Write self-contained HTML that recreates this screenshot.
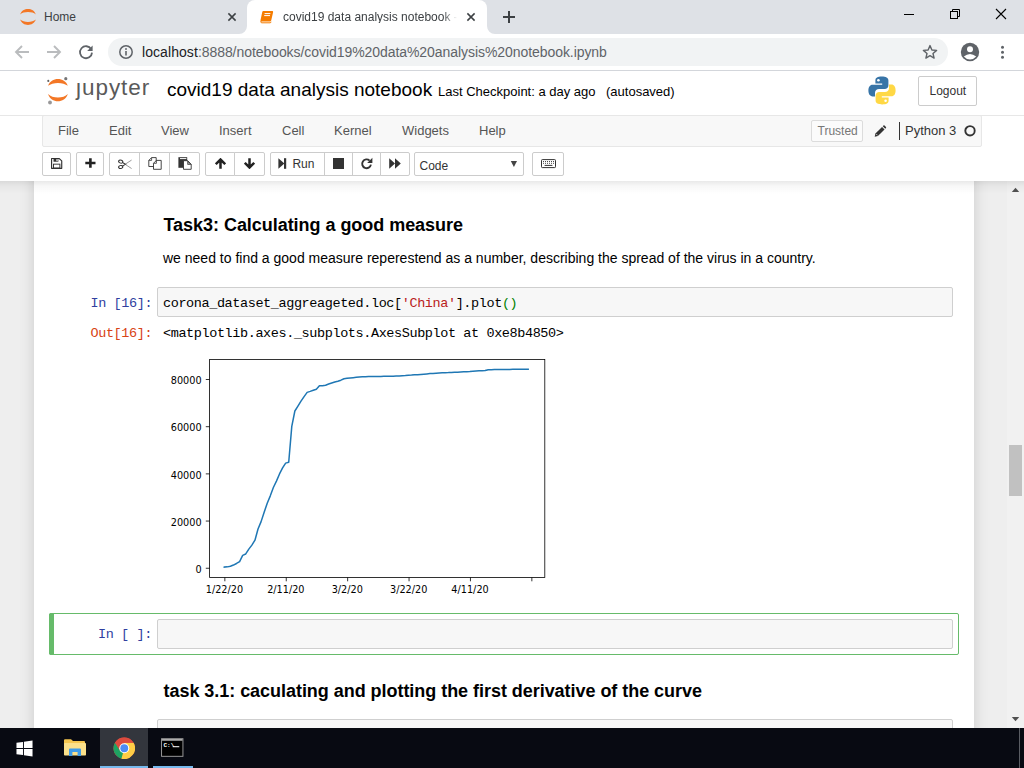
<!DOCTYPE html>
<html>
<head>
<meta charset="utf-8">
<title>covid19 data analysis notebook</title>
<style>
html,body{margin:0;padding:0;}
body{width:1024px;height:768px;overflow:hidden;position:relative;background:#fff;font-family:"Liberation Sans",Arial,sans-serif;color:#000;}
.abs{position:absolute;}
.t{position:absolute;white-space:nowrap;line-height:1;}
/* ---------- browser chrome ---------- */
#tabstrip{left:0;top:0;width:1024px;height:34px;background:#dee1e6;}
#tab-active{left:247px;top:0;width:240px;height:34px;background:#fff;border-radius:8px 8px 0 0;}
#navbar{left:0;top:34px;width:1024px;height:36px;background:#fff;}
#navline{left:0;top:70px;width:1024px;height:1px;background:#d3d6db;}
#omni{left:108px;top:38px;width:840px;height:28px;border-radius:14px;background:#f1f3f4;}
.chrometxt{font-size:12px;color:#3c4043;}
/* ---------- jupyter header ---------- */
#hdrline{left:0;top:115px;width:1024px;height:1px;background:#e7e7e7;}
#menubar{left:42px;top:115px;width:938px;height:30px;background:#f8f8f8;border:1px solid #e7e7e7;border-radius:2px;}
.menu{font-size:13px;color:#555;top:124px;}
.btn{position:absolute;top:152px;height:22px;border:1px solid #ccc;background:#fff;box-sizing:content-box;}
/* ---------- notebook ---------- */
#site{left:0;top:181px;width:1007px;height:547px;background:#eee;overflow:hidden;}
#nbc{left:34px;top:-20px;width:940px;height:600px;background:#fff;box-shadow:0 0 12px 1px rgba(87,87,87,0.2);}
.mono{font-family:"Liberation Mono","DejaVu Sans Mono",monospace;font-size:13.5px;letter-spacing:-0.4px;}
.inbox{position:absolute;border:1px solid #cfcfcf;border-radius:2px;background:#f7f7f7;box-sizing:border-box;}
/* ---------- taskbar ---------- */
#taskbar{left:0;top:728px;width:1024px;height:40px;background:#080a12;}
</style>
</head>
<body>

<!-- ================= TAB STRIP ================= -->
<div id="tabstrip" class="abs"></div>
<div id="tab-active" class="abs"></div>
<div id="navbar" class="abs"></div>
<div id="navline" class="abs"></div>
<div id="omni" class="abs"></div>

<!-- inactive-tab / active-tab "feet" -->
<svg class="abs" style="left:239px;top:26px" width="8" height="8"><path d="M0 8 H8 V0 A8 8 0 0 1 0 8 Z" fill="#fff"/></svg>
<svg class="abs" style="left:487px;top:26px" width="8" height="8"><path d="M8 8 H0 V0 A8 8 0 0 0 8 8 Z" fill="#fff"/></svg>

<!-- Home tab -->
<svg class="abs" style="left:20px;top:9px" width="16" height="16" viewBox="0 0 16 16">
  <path d="M0.2 5.4 C2.4 -1.8 13.6 -1.8 15.8 5.4 C12.4 2.33 3.6 2.33 0.2 5.4 Z" fill="#f37726"/>
  <path d="M0.2 10.6 C2.4 17.8 13.6 17.8 15.8 10.6 C12.4 13.67 3.6 13.67 0.2 10.6 Z" fill="#f37726"/>
</svg>
<div class="t chrometxt" style="left:44px;top:11px">Home</div>
<svg class="abs" style="left:226px;top:11px" width="12" height="12" viewBox="0 0 12 12"><path d="M2.4 2.4 L9.6 9.6 M9.6 2.4 L2.4 9.6" stroke="#3c4043" stroke-width="1.5" fill="none"/></svg>

<!-- Active tab -->
<svg class="abs" style="left:259px;top:10px" width="15" height="14" viewBox="0 0 15 14">
  <path d="M4.2 1 H13.2 Q14.4 1 14.1 2.2 L12.2 10.6 Q12 11.6 11 11.6 H2.6 Q1.2 11.6 1.5 10.3 L3.2 2.2 Q3.5 1 4.2 1 Z" fill="#f57c00"/>
  <path d="M2 11 Q1.4 12.8 2.8 12.8 H11 Q11.9 12.8 12.2 11.8" fill="none" stroke="#f57c00" stroke-width="1"/>
  <path d="M5.6 3.6 H11.4 M5.2 5.6 H11" stroke="#fff" stroke-width="1" fill="none"/>
</svg>
<div class="t chrometxt" style="left:283px;top:11px;width:174px;overflow:hidden;-webkit-mask-image:linear-gradient(90deg,#000 0,#000 160px,transparent 174px);">covid19 data analysis notebook - Jupyter Notebook</div>
<svg class="abs" style="left:465px;top:11px" width="12" height="12" viewBox="0 0 12 12"><path d="M2.4 2.4 L9.6 9.6 M9.6 2.4 L2.4 9.6" stroke="#3c4043" stroke-width="1.5" fill="none"/></svg>
<svg class="abs" style="left:502px;top:10px" width="14" height="14" viewBox="0 0 14 14"><path d="M7 1 V13 M1 7 H13" stroke="#3c4043" stroke-width="2" fill="none"/></svg>

<!-- window controls -->
<div class="abs" style="left:904px;top:14px;width:10px;height:1px;background:#000"></div>
<svg class="abs" style="left:949px;top:8px" width="13" height="13" viewBox="0 0 13 13">
  <rect x="1.5" y="3.5" width="7" height="7" fill="none" stroke="#000" stroke-width="1"/>
  <path d="M3.5 3.5 V1.5 H10.5 V8.5 H8.5" fill="none" stroke="#000" stroke-width="1"/>
</svg>
<svg class="abs" style="left:995px;top:8px" width="12" height="12" viewBox="0 0 12 12"><path d="M1 1 L11 11 M11 1 L1 11" stroke="#000" stroke-width="1.1" fill="none"/></svg>

<!-- nav buttons -->
<svg class="abs" style="left:14px;top:44px" width="16" height="16" viewBox="0 0 16 16"><path d="M15 8 H2.5 M8 2 L2 8 L8 14" stroke="#babcbe" stroke-width="1.9" fill="none"/></svg>
<svg class="abs" style="left:46px;top:44px" width="16" height="16" viewBox="0 0 16 16"><path d="M1 8 H13.5 M8 2 L14 8 L8 14" stroke="#babcbe" stroke-width="1.9" fill="none"/></svg>
<svg class="abs" style="left:78px;top:44px" width="16" height="16" viewBox="0 0 16 16">
  <path d="M13.2 5.2 A6 6 0 1 0 14 8.6" stroke="#5f6368" stroke-width="1.8" fill="none"/>
  <path d="M14.6 1.6 V7 H9.2 Z" fill="#5f6368"/>
</svg>

<!-- omnibox content -->
<svg class="abs" style="left:118px;top:44px" width="16" height="16" viewBox="0 0 16 16">
  <circle cx="8" cy="8" r="6.2" fill="none" stroke="#5f6368" stroke-width="1.5"/>
  <path d="M8 7 V11.4" stroke="#5f6368" stroke-width="1.6"/><circle cx="8" cy="5" r="0.95" fill="#5f6368"/>
</svg>
<div class="t" style="left:142px;top:45px;font-size:14px;color:#5f6368;letter-spacing:-0.062px"><span style="color:#202124;letter-spacing:0.07px">localhost</span>:8888/notebooks/covid19%20data%20analysis%20notebook.ipynb</div>
<svg class="abs" style="left:922px;top:44px" width="16" height="16" viewBox="0 0 16 16"><path d="M8 1.6 L9.9 6 L14.6 6.4 L11 9.5 L12.1 14.1 L8 11.7 L3.9 14.1 L5 9.5 L1.4 6.4 L6.1 6 Z" fill="none" stroke="#5f6368" stroke-width="1.4" stroke-linejoin="round"/></svg>
<svg class="abs" style="left:960px;top:42px" width="20" height="20" viewBox="0 0 20 20">
  <circle cx="10" cy="10" r="9.2" fill="#5f6368"/>
  <circle cx="10" cy="7.2" r="3" fill="#fff"/>
  <path d="M3.8 14.6 Q10 9.6 16.2 14.6 Q13.6 17.6 10 17.6 Q6.4 17.6 3.8 14.6 Z" fill="#fff"/>
</svg>
<svg class="abs" style="left:1000px;top:44px" width="5" height="16" viewBox="0 0 5 16"><circle cx="2.5" cy="3.3" r="1.5" fill="#5f6368"/><circle cx="2.5" cy="8.3" r="1.5" fill="#5f6368"/><circle cx="2.5" cy="13.3" r="1.5" fill="#5f6368"/></svg>

<!-- ================= JUPYTER HEADER ================= -->

<!-- jupyter logo -->
<svg class="abs" style="left:44px;top:74px" width="28" height="32" viewBox="0 0 28 32">
  <path d="M4.1 11.8 C7 2.7 20.8 2.7 23.8 11.8 C19.5 7.9 8.4 7.9 4.1 11.8 Z" fill="#f37726"/>
  <path d="M4.1 20 C7 29.7 20.8 29.7 23.8 20 C19.5 24.7 8.4 24.7 4.1 20 Z" fill="#f37726"/>
  <circle cx="21.8" cy="4.7" r="1.6" fill="#767677"/>
  <circle cx="4.3" cy="6.9" r="1.05" fill="#616262"/>
  <circle cx="6" cy="28.5" r="1.9" fill="#989798"/>
</svg>
<div class="t" id="jup" style="left:76px;top:77px;font-size:22.5px;color:#5a5a5a;letter-spacing:0.95px">&#567;upyter</div>
<div class="t" id="nbname" style="left:167px;top:80px;font-size:19px;color:#000">covid19 data analysis notebook</div>
<div class="t" id="ckpt" style="left:438px;top:85px;font-size:13px;color:#000">Last Checkpoint: a day ago</div>
<div class="t" id="autos" style="left:606px;top:85px;font-size:13px;color:#000">(autosaved)</div>

<!-- python logo -->
<svg class="abs" style="left:868px;top:76px" width="28" height="29" viewBox="0 0 28 29">
  <path d="M13.8 0.5 C9.6 0.5 7.4 1.6 7.4 4.4 V7.6 H14.2 V8.8 H4.6 C1.8 8.8 0.4 11.2 0.4 14.6 C0.4 18 1.8 20.4 4.6 20.4 H7 V16.8 C7 14.6 8.8 13 11 13 H16.8 C18.8 13 20.4 11.4 20.4 9.4 V4.4 C20.4 1.8 17.8 0.5 13.8 0.5 Z" fill="#3774a7"/>
  <circle cx="10.4" cy="4.2" r="1.3" fill="#fff"/>
  <path d="M14.2 28.5 C18.4 28.5 20.6 27.4 20.6 24.6 V21.4 H13.8 V20.2 H23.4 C26.2 20.2 27.6 17.8 27.6 14.4 C27.6 11 26.2 8.6 23.4 8.6 H21 V12.2 C21 14.4 19.2 16 17 16 H11.2 C9.2 16 7.6 17.6 7.6 19.6 V24.6 C7.6 27.2 10.2 28.5 14.2 28.5 Z" fill="#ffd845"/>
  <circle cx="17.6" cy="24.8" r="1.3" fill="#fff"/>
</svg>
<div class="abs" style="left:918px;top:76px;width:57px;height:28px;border:1px solid #ccc;border-radius:2px;background:#fff"></div>
<div class="t" id="logout" style="left:929.5px;top:85px;font-size:12px;color:#333">Logout</div>
<div id="hdrline" class="abs"></div>
<div id="menubar" class="abs"></div>

<!-- menus -->
<div class="t menu" id="m1" style="left:58px">File</div>
<div class="t menu" id="m2" style="left:109px">Edit</div>
<div class="t menu" id="m3" style="left:161px">View</div>
<div class="t menu" id="m4" style="left:219px">Insert</div>
<div class="t menu" id="m5" style="left:282px">Cell</div>
<div class="t menu" id="m6" style="left:334px">Kernel</div>
<div class="t menu" id="m7" style="left:402px">Widgets</div>
<div class="t menu" id="m8" style="left:479px">Help</div>
<div class="abs" style="left:811px;top:120px;width:50px;height:20px;border:1px solid #dcdcdc;border-radius:2px;background:#fbfbfb"></div>
<div class="t" id="trusted" style="left:817.5px;top:125px;font-size:12px;color:#777">Trusted</div>
<svg class="abs" style="left:874px;top:124.5px" width="12.5" height="12.5" viewBox="0 0 14 14">
  <path d="M0.8 13.2 L1.6 9.6 L9 2.2 L11.8 5 L4.4 12.4 Z" fill="#333"/>
  <path d="M9.8 1.4 L10.6 0.6 Q11.2 0.1 11.8 0.6 L13.4 2.2 Q13.9 2.8 13.4 3.4 L12.6 4.2 Z" fill="#333"/>
  <path d="M2.4 10 L4 11.6" stroke="#fff" stroke-width="0.8"/>
</svg>
<div class="abs" style="left:899px;top:122px;width:1px;height:18px;background:#333"></div>
<div class="t" id="kname" style="left:905px;top:124px;font-size:13px;color:#333">Python 3</div>
<svg class="abs" style="left:963px;top:124px" width="14" height="14" viewBox="0 0 14 14"><circle cx="7" cy="6.8" r="4.7" fill="none" stroke="#333" stroke-width="1.9"/></svg>


<!-- toolbar -->
<div class="btn" style="left:42px;width:27px;border-radius:2px"></div>
<div class="btn" style="left:76px;width:26px;border-radius:2px"></div>
<div class="btn" style="left:109px;width:29px;border-radius:2px 0 0 2px"></div>
<div class="btn" style="left:139px;width:29px;border-radius:0"></div>
<div class="btn" style="left:169px;width:29px;border-radius:0 2px 2px 0"></div>
<div class="btn" style="left:205px;width:28px;border-radius:2px 0 0 2px"></div>
<div class="btn" style="left:234px;width:29px;border-radius:0 2px 2px 0"></div>
<div class="btn" style="left:270px;width:53px;border-radius:2px 0 0 2px"></div>
<div class="btn" style="left:324px;width:27px;border-radius:0"></div>
<div class="btn" style="left:352px;width:27px;border-radius:0"></div>
<div class="btn" style="left:380px;width:28px;border-radius:0 2px 2px 0"></div>
<div class="btn" style="left:414px;width:108px;border-radius:2px"></div>
<div class="btn" style="left:532px;width:30px;border-radius:2px"></div>

<!-- save -->
<svg class="abs" style="left:51px;top:157.8px" width="11.6" height="11.2" viewBox="0 0 12 12" preserveAspectRatio="none">
  <path d="M0.6 0.6 H8.6 L11.1 3.1 V11.1 H0.6 Z" fill="none" stroke="#333" stroke-width="1.2" stroke-linejoin="round"/>
  <rect x="2.6" y="0.8" width="5" height="3.2" fill="#333"/><rect x="5.6" y="1.2" width="1.3" height="2.2" fill="#fff"/>
  <rect x="2.6" y="6.6" width="6.6" height="4.2" fill="none" stroke="#333" stroke-width="1"/>
</svg>
<!-- plus -->
<svg class="abs" style="left:85px;top:157.7px" width="11" height="10.2" viewBox="0 0 11 11" preserveAspectRatio="none"><path d="M5.4 0.3 V10.5 M0.3 5.4 H10.5" stroke="#222" stroke-width="2.6" fill="none"/></svg>
<!-- cut -->
<svg class="abs" style="left:118px;top:158.6px" width="14" height="10.6" viewBox="0 0 14 12" preserveAspectRatio="none">
  <ellipse cx="2.7" cy="2.9" rx="2.1" ry="1.7" transform="rotate(25 2.7 2.9)" fill="none" stroke="#333" stroke-width="1.1"/>
  <ellipse cx="2.7" cy="9.1" rx="2.1" ry="1.7" transform="rotate(-25 2.7 9.1)" fill="none" stroke="#333" stroke-width="1.1"/>
  <path d="M4.4 4 L8.2 6.4 M4.4 8 L8.2 5.6" stroke="#333" stroke-width="1.1" fill="none"/>
  <path d="M7.6 5.6 L13.6 1.2 M7.6 6.4 L13.6 10.8" stroke="#8a8a8a" stroke-width="0.9" fill="none"/>
</svg>
<!-- copy -->
<svg class="abs" style="left:148px;top:157px" width="14" height="13" viewBox="0 0 14 13">
  <path d="M3.6 0.6 H8.2 V9.5 H0.8 V3.4 Z" fill="#fff" stroke="#333" stroke-width="0.9" stroke-linejoin="round"/>
  <path d="M0.8 3.4 H3.6 V0.6" fill="none" stroke="#333" stroke-width="0.8"/>
  <path d="M8.4 3.4 H13.2 V12.3 H5.5 V6.3 Z" fill="#fff" stroke="#333" stroke-width="0.9" stroke-linejoin="round"/>
  <path d="M5.5 6.3 H8.4 V3.4" fill="none" stroke="#333" stroke-width="0.8"/>
</svg>
<!-- paste -->
<svg class="abs" style="left:178px;top:157px" width="14" height="13" viewBox="0 0 14 13">
  <rect x="0.4" y="0.2" width="8.8" height="10.6" fill="#333"/>
  <rect x="2" y="1.1" width="6.4" height="1" fill="#fff"/>
  <path d="M5.5 3.7 H9.6 L13.2 7.4 V12.3 H5.5 Z" fill="#fff" stroke="#333" stroke-width="0.9" stroke-linejoin="round"/>
  <path d="M9.6 3.7 V7.4 H13.2 Z" fill="#333" stroke="#333" stroke-width="0.5"/>
  <path d="M10.3 5.2 V6.7 H11.8 Z" fill="#fff"/>
</svg>
<!-- up / down -->
<svg class="abs" style="left:215px;top:158px" width="11" height="11" viewBox="0 0 11 11"><path d="M5.5 10.8 V2 M0.8 6.2 L5.5 1.5 L10.2 6.2" stroke="#222" stroke-width="2.5" fill="none"/></svg>
<svg class="abs" style="left:244px;top:158px" width="11" height="11" viewBox="0 0 11 11"><path d="M5.5 0.2 V9 M0.8 4.8 L5.5 9.5 L10.2 4.8" stroke="#222" stroke-width="2.5" fill="none"/></svg>
<!-- run -->
<svg class="abs" style="left:278px;top:158px" width="9" height="11" viewBox="0 0 9 11"><path d="M0.4 0.2 L6.4 5.5 L0.4 10.8 Z" fill="#333"/><rect x="6" y="0.2" width="2.2" height="10.6" fill="#333"/></svg>
<div class="t" id="runtxt" style="left:292.4px;top:158px;font-size:12px;color:#333">Run</div>
<!-- stop -->
<div class="abs" style="left:333px;top:158px;width:11px;height:11px;background:#333"></div>
<!-- restart -->
<svg class="abs" style="left:360px;top:157px" width="13" height="13" viewBox="0 0 13 13">
  <path d="M9.6 3.6 A4.4 4.4 0 1 0 10.9 7.6" stroke="#333" stroke-width="1.9" fill="none"/>
  <path d="M12.4 0.8 V6 H7.2 Z" fill="#333"/>
</svg>
<!-- fast forward -->
<svg class="abs" style="left:389px;top:158px" width="12" height="11" viewBox="0 0 12 11"><path d="M0.2 0.2 L6 5.5 L0.2 10.8 Z M6 0.2 L11.8 5.5 L6 10.8 Z" fill="#333"/></svg>
<!-- select -->
<div class="t" id="codesel" style="left:419.5px;top:160px;font-size:12px;color:#333">Code</div>
<svg class="abs" style="left:510px;top:160px" width="8" height="8" viewBox="0 0 8 8"><path d="M0.8 1 H7 L3.9 7 Z" fill="#444"/></svg>
<!-- keyboard -->
<svg class="abs" style="left:541px;top:159px" width="15" height="10" viewBox="0 0 15 10">
  <rect x="0.5" y="0.6" width="14" height="8" rx="0.8" fill="#fff" stroke="#333" stroke-width="1"/>
  <path d="M2 2.5 H13 M2 4.3 H13" stroke="#333" stroke-width="0.9" stroke-dasharray="1 1"/>
  <path d="M3.6 6.4 H11.4" stroke="#333" stroke-width="1"/>
</svg>

<!-- ================= NOTEBOOK ================= -->
<div id="site" class="abs">
  <div id="nbc" class="abs"></div>
</div>

<!-- notebook content (page coords) -->
<div class="t" id="h3a" style="left:163.5px;top:216px;font-size:18px;font-weight:bold;color:#000;letter-spacing:-0.04px">Task3: Calculating a good measure</div>
<div class="t" id="p1" style="left:163px;top:251px;font-size:14px;color:#000">we need to find a good measure reperestend as a number, describing the spread of the virus in a country.</div>

<div class="inbox" style="left:157px;top:287px;width:796px;height:30px"></div>
<div class="t mono" id="in16" style="left:90.5px;top:297px;color:#303f9f">In [16]:</div>
<div class="t mono" id="code16" style="left:163px;top:297px;color:#000">corona_dataset_aggreageted.loc[<span style="color:#ba2121">'China'</span>].plot<span style="color:#008000">()</span></div>
<div class="t mono" id="out16" style="left:90.5px;top:327px;color:#d84315">Out[16]:</div>
<div class="t mono" id="res16" style="left:163px;top:327px;color:#000">&lt;matplotlib.axes._subplots.AxesSubplot at 0xe8b4850&gt;</div>

<!-- plot -->
<svg class="abs" id="plot" style="left:160px;top:350px" width="400" height="256" viewBox="0 0 400 256" font-family="DejaVu Sans, Liberation Sans, sans-serif" font-size="9.7" fill="#000">
  <polyline points="64.85,217.10 67.92,216.87 70.99,216.22 74.06,215.06 77.13,213.48 80.20,211.58 83.27,205.33 86.34,203.96 89.41,199.09 92.48,195.15 95.55,190.19 98.62,178.95 101.69,171.63 104.76,162.17 107.83,153.31 110.90,145.85 113.97,137.49 117.04,131.08 120.11,123.93 123.18,117.94 126.25,113.12 129.32,112.23 132.39,76.33 135.46,61.00 138.53,56.12 141.60,51.14 144.67,46.59 147.74,42.37 150.81,41.40 153.88,40.32 156.95,39.20 160.02,35.75 163.09,35.70 166.16,35.18 169.23,33.97 172.30,32.99 175.37,31.96 178.44,31.18 181.51,30.17 184.58,28.80 187.65,28.32 190.72,28.02 193.79,27.72 196.86,27.37 199.93,27.00 203.00,26.81 206.07,26.69 209.14,26.60 212.21,26.54 215.28,26.46 218.35,26.43 221.42,26.40 224.49,26.32 227.56,26.26 230.63,26.19 233.70,26.13 236.77,26.03 239.84,25.90 242.91,25.67 245.98,25.54 249.05,25.24 252.12,25.09 255.19,24.87 258.26,24.70 261.33,24.41 264.40,24.14 267.47,23.90 270.54,23.61 273.61,23.43 276.68,23.23 279.75,23.04 282.82,22.87 285.89,22.68 288.96,22.61 292.03,22.47 295.10,22.32 298.17,22.19 301.24,21.98 304.31,21.80 307.38,21.66 310.45,21.49 313.52,21.21 316.59,21.02 319.66,20.80 322.73,20.68 325.80,20.57 328.87,19.72 331.94,19.66 335.01,19.61 338.08,19.59 341.15,19.50 344.22,19.47 347.29,19.43 350.36,19.39 353.43,19.37 356.50,19.36 359.57,19.35 362.64,19.29 365.71,19.28 368.78,19.26" fill="none" stroke="#1f77b4" stroke-width="1.5" stroke-linejoin="round" stroke-linecap="square" transform="translate(-0.6 0)"/>
  <rect x="49.60" y="9.40" width="335.20" height="218.10" fill="none" stroke="#000" stroke-width="0.8"/>
  <path d="M64.85 227.50 v3.8 M126.25 227.50 v3.8 M187.65 227.50 v3.8 M249.05 227.50 v3.8 M310.45 227.50 v3.8 M371.85 227.50 v3.8 M49.60 218.25 h-3.8 M49.60 171.06 h-3.8 M49.60 123.88 h-3.8 M49.60 76.69 h-3.8 M49.60 29.50 h-3.8 " stroke="#000" stroke-width="0.8" fill="none"/>
  <text x="64.45" y="242.60" text-anchor="middle">1/22/20</text>
  <text x="125.85" y="242.60" text-anchor="middle">2/11/20</text>
  <text x="187.25" y="242.60" text-anchor="middle">3/2/20</text>
  <text x="248.65" y="242.60" text-anchor="middle">3/22/20</text>
  <text x="310.05" y="242.60" text-anchor="middle">4/11/20</text>
  <text x="41.60" y="223.05" text-anchor="end">0</text>
  <text x="41.60" y="175.86" text-anchor="end">20000</text>
  <text x="41.60" y="128.67" text-anchor="end">40000</text>
  <text x="41.60" y="81.49" text-anchor="end">60000</text>
  <text x="41.60" y="34.30" text-anchor="end">80000</text>
</svg>

<!-- selected empty cell -->
<div class="abs" style="left:49px;top:613px;width:908px;height:40px;border:1px solid #66bb6a;border-radius:2px;background:#fff"></div>
<div class="abs" style="left:49px;top:613px;width:5px;height:42px;background:#66bb6a;border-radius:2px 0 0 2px"></div>
<div class="inbox" style="left:157px;top:619px;width:796px;height:30px"></div>
<div class="t mono" id="inE" style="left:98px;top:628px;color:#303f9f">In [ ]:</div>
<div class="t" id="h3b" style="left:163.5px;top:682px;font-size:18px;font-weight:bold;color:#000;letter-spacing:-0.04px">task 3.1: caculating and plotting the first derivative of the curve</div>
<div class="inbox" style="left:157px;top:719px;width:796px;height:30px"></div>

<!-- scrollbar -->
<div class="abs" style="left:1007px;top:181px;width:17px;height:547px;background:#f1f1f1"></div>
<div class="abs" style="left:1009px;top:445px;width:13px;height:51px;background:#c1c1c1"></div>
<div class="abs" style="left:0;top:181px;width:1024px;height:13px;background:linear-gradient(to bottom,rgba(0,0,0,0.085),rgba(0,0,0,0.03) 5px,rgba(0,0,0,0))"></div>
<svg class="abs" style="left:1011px;top:187px" width="9" height="6" viewBox="0 0 9 6"><path d="M0.8 5 L4.5 0.8 L8.2 5 Z" fill="#505050"/></svg>
<svg class="abs" style="left:1011px;top:716px" width="9" height="6" viewBox="0 0 9 6"><path d="M0.8 1 L4.5 5.2 L8.2 1 Z" fill="#505050"/></svg>

<!-- ================= TASKBAR ================= -->
<div id="taskbar" class="abs"></div>

<div class="abs" style="left:100px;top:728px;width:48px;height:40px;background:#33363d"></div>
<div class="abs" style="left:100px;top:766px;width:48px;height:2px;background:#76b9ed"></div>
<div class="abs" style="left:153px;top:766px;width:40px;height:2px;background:#76b9ed"></div>
<div class="abs" style="left:1019px;top:728px;width:1px;height:40px;background:#5a5d63"></div>
<!-- windows logo -->
<svg class="abs" style="left:15.5px;top:739.5px" width="17" height="17" viewBox="0 0 18 18">
  <path d="M0.5 3 L7.4 2 V8.5 H0.5 Z M8.4 1.9 L17.5 0.5 V8.5 H8.4 Z M0.5 9.5 H7.4 V16 L0.5 15 Z M8.4 9.5 H17.5 V17.5 L8.4 16.1 Z" fill="#fff"/>
</svg>
<!-- explorer -->
<svg class="abs" style="left:63px;top:737px" width="24" height="21" viewBox="0 0 24 21">
  <path d="M1 3.2 Q1 2.2 2 2.2 H8 L10 4 H21 Q22 4 22 5 V17 H1 Z" fill="#f5c64f"/>
  <rect x="1" y="6" width="22" height="12.5" rx="0.8" fill="#fbe08a"/>
  <path d="M6 19 V12.6 Q6 11.6 7 11.6 H17 Q18 11.6 18 12.6 V19 H14.6 V15 H9.4 V19 Z" fill="#3f9be8"/>
</svg>
<!-- chrome -->
<svg class="abs" style="left:112.8px;top:736.6px" width="22.5" height="22.5" viewBox="0 0 24 24">
  <circle cx="12" cy="12" r="11.5" fill="#dd4b3e"/>
  <path d="M12 12 L2.04 6.25 A11.5 11.5 0 0 0 9.0 23.1 L14.6 13.5 Z" fill="#1ea362"/>
  <path d="M12 12 L9.0 23.1 A11.5 11.5 0 0 0 21.96 6.25 L12 6.25 Z" fill="#ffcd46"/>
  <path d="M2.04 6.25 A11.5 11.5 0 0 1 21.96 6.25 L12 6.25 L7.5 14.6 Z" fill="#dd4b3e"/>
  <circle cx="12" cy="12" r="5.3" fill="#fff"/>
  <circle cx="12" cy="12" r="4.2" fill="#4c8bf5"/>
</svg>
<!-- cmd -->
<svg class="abs" style="left:161px;top:738px" width="22.5" height="19" viewBox="0 0 24 20">
  <rect x="0.6" y="0.6" width="22.8" height="18.8" fill="#000" stroke="#a0a0a0" stroke-width="1"/>
  <rect x="1.1" y="1.1" width="21.8" height="1.6" fill="#c8c8c8"/>
  <text x="2.6" y="9.6" font-family="Liberation Mono, monospace" font-size="6.5" font-weight="bold" fill="#fff">C:\</text>
  <rect x="12.5" y="8.6" width="7" height="1.1" fill="#fff"/>
</svg>

</body>
</html>
